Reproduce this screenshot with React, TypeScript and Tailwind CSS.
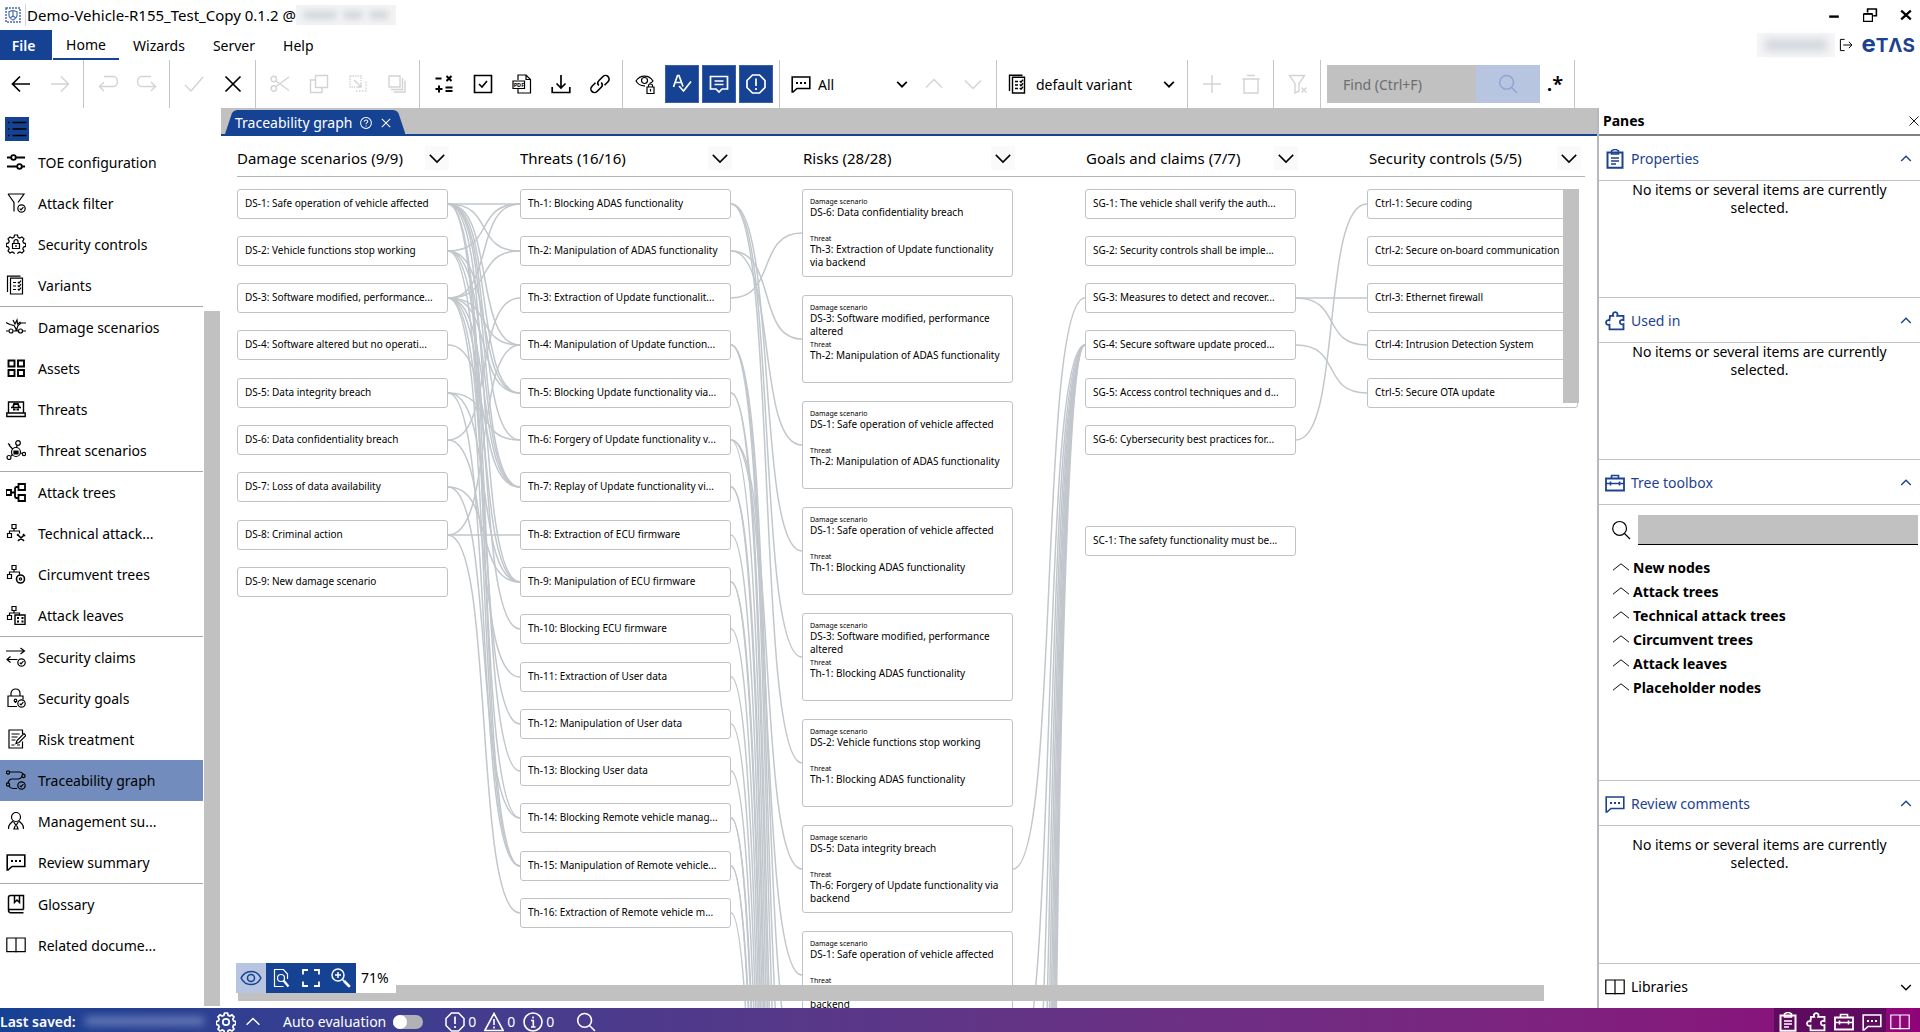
import type { ReactNode } from "react";

type IconProps = { children: ReactNode; className?: string; sw?: number; size?: string };

function Icon({ children, className = "", sw = 1.2, size = "size-5" }: IconProps) {
  return (
    <svg viewBox="0 0 20 20" fill="none" stroke="currentColor" strokeWidth={sw} className={`${size} shrink-0 ${className}`} aria-hidden="true">
      {children}
    </svg>
  );
}

/* ---------- shared glyphs ---------- */
const gComment = (
  <>
    <path d="M1.2 3h17.6v11.5H6L2 18H1.2z" strokeWidth="1.6" />
    <path d="M5 9h2M9 9h2M13 9h2" strokeWidth="2" />
  </>
);
const gBook = <path d="M.8 3h18.4v13.6H.8zM10 3v14.4" />;
const gClipboard = (
  <>
    <path d="M2.5 3.5h15v15.3h-15z" strokeWidth="2" />
    <path d="M6.5 1.8c2-1.4 5-1.4 7 0V5h-7z" fill="none" strokeWidth="1.5" />
    <path d="M6 9h8M6 12h8M6 15h5" strokeWidth="1.4" />
  </>
);
const gPuzzle = (
  <path
    d="M5 4.8h3.2c-.8-2 0-3.600 2-3.600s2.800 1.600 2 3.600H18.500v4.400c-2.200-.8-3.700.2-3.700 1.900s1.500 2.700 3.700 1.900v5.300H4.500v-4.600c-1.800.6-3.500-.2-3.500-2.200s1.700-2.800 3.500-2.200z"
    strokeWidth="1.8"
  />
);
const gToolbox = (
  <>
    <path d="M1 5.500h18v12H1z" strokeWidth="1.800" />
    <path d="M6.500 5V2.500h7V5M1 10.500h18M5.500 8.500v4M14.500 8.500v4" strokeWidth="1.600" />
  </>
);
const gSearch = <path d="M8.600 1.500a6.900 6.900 0 1 1 0 13.800 6.900 6.900 0 0 1 0-13.800zM13.500 13.500l5.500 5.500" />;
const gBadge = (
  <>
    <circle cx="15.500" cy="15.500" r="3.700" />
    <path d="M13.700 15.600l1.300 1.300 2.400-2.700" />
  </>
);
const gChecklist = (
  <>
    <path d="M1.500 17V1.200h13" />
    <path d="M4.500 3.200h12v15.800h-12z" />
    <path d="M7 7.500h3M7 11h3M7 14.500h3M11.800 7l1.200 1.200 2-2.500M11.800 10.500l1.200 1.200 2-2.500M11.800 14l1.200 1.200 2-2.500" />
  </>
);
const gTree = (
  <>
    <path d="M6 1.500h4v4H6zM1.500 10.500h4v4h-4z" />
    <path d="M8 5.500V8M3.500 10.500V8h10v2.500" />
  </>
);
const gChevDown = <path d="M2 6.500l8 8 8-8" />;
const gChevUp = <path d="M2 13.500l8-8 8 8" />;
const gGear = (
  <path d="M8.500 1h3l.6 2.300 1.700.8 2.200-1.200 2 2-1.200 2.200.7 1.800 2.200.7v2.800l-2.200.7-.7 1.800 1.200 2.100-2 2-2.200-1.100-1.700.8-.6 2.300h-3l-.6-2.300-1.700-.8-2.200 1.100-2-2 1.200-2.100-.7-1.800-2.200-.7V9.600l2.200-.7.700-1.800L2 4.900l2-2 2.200 1.200 1.700-.8z" />
);
const gOctagon = (
  <>
    <path d="M6.500 1h7L19 6.500v7L13.500 19h-7L1 13.500v-7z" />
    <path d="M10 4.500v7.500M10 14v2" strokeWidth="1.700" />
  </>
);

/* ---------- title and menu bar ---------- */
function TitleBar() {
  return (
    <header className="flex h-[30px] shrink-0 items-center pl-[5px]">
      <svg viewBox="0 0 16 16" className="size-4 text-[#4a6cb0]" fill="none" stroke="currentColor" aria-hidden="true">
        <rect x="1" y="1" width="14" height="14" strokeDasharray="2 1" strokeWidth="1.500" />
        <path d="M8 3.500l4 1.300v3.500c0 2.500-2 3.700-4 4.700-2-1-4-2.200-4-4.700V4.800zM8 3.500V9M8 9l-3 2M8 9l3 2" strokeWidth="1.200" />
      </svg>
      <div className="ml-1 mr-px h-[22px] w-px bg-gray-300" />
      <h1 className="whitespace-nowrap text-[15px] leading-5">Demo-Vehicle-R155_Test_Copy 0.1.2 @</h1>
      <div className="flex h-5 w-[100px] items-center gap-2 overflow-hidden bg-[#f3f3f3] px-2" aria-hidden="true">
        <div className="h-2 w-9 bg-gray-300 blur-[3px]" />
        <div className="h-2 w-5 bg-gray-300 blur-[3px]" />
        <div className="h-2 w-5 bg-gray-300 blur-[3px]" />
      </div>
      <div className="-mr-1 ml-auto flex">
        <button aria-label="Minimize" className="flex w-9 justify-center"><Icon size="size-4"><path d="M4 12h12" strokeWidth="3" /></Icon></button>
        <button aria-label="Restore" className="flex w-9 justify-center">
          <Icon size="size-4"><path d="M2 9h11v9H2z" strokeWidth="1.500" /><path d="M2 8.500h11M7 2.500h11.500M7 1.500V7M18 2v9h-4" strokeWidth="2" /></Icon>
        </button>
        <button aria-label="Close" className="flex w-9 justify-center"><Icon size="size-4"><path d="M4 4.500l12 11M16 4.500l-12 11" strokeWidth="2.800" /></Icon></button>
      </div>
    </header>
  );
}

const menus = ["Wizards", "Server", "Help"];

function MenuBar() {
  return (
    <nav className="flex h-[30px] shrink-0 items-stretch text-[14px]">
      <button className="w-[52px] bg-[#164293] pr-[5px] font-semibold text-white">File</button>
      <button className="ml-px w-[66px] border-b-2 border-[#164293]">Home</button>
      {menus.map((m) => (
        <button key={m} className="px-[14px]">{m}</button>
      ))}
      <div className="ml-auto flex items-center pr-[5px]">
        <div className="flex h-6 w-[78px] items-center bg-[#f6f6f6] px-2" aria-hidden="true"><div className="h-3 w-full bg-gray-300 blur-[4px]" /></div>
        <button aria-label="Log out" className="ml-1 mr-2">
          <Icon size="size-[14px]" sw={1.400}><path d="M8 2H2v16h6M6 10h12M14 5.500l4.500 4.500-4.500 4.500" /></Icon>
        </button>
        <span className="flex items-baseline font-['Inter',sans-serif] font-bold leading-6 text-[#1d428f]">
          <span className="text-[24px]">e</span><span className="text-[19px]">TΛS</span>
        </span>
      </div>
    </nav>
  );
}

/* ---------- toolbar ---------- */
function Tool({ label, children, off, sw }: { label: string; children: ReactNode; off?: boolean; sw?: number }) {
  return (
    <button aria-label={label} disabled={off} className={`flex h-full w-[39px] items-center justify-center ${off ? "text-[#d3d3d3]" : "text-black"}`}>
      <Icon sw={sw ?? 1.400}>{children}</Icon>
    </button>
  );
}

function Group({ children, className = "pl-1 pr-[3px]" }: { children: ReactNode; className?: string }) {
  return <div className={`flex shrink-0 items-center border-r border-[#c1c7cc] ${className}`}>{children}</div>;
}

function Toggle({ label, children }: { label: string; children: ReactNode }) {
  return (
    <button aria-label={label} aria-pressed="true" className="flex h-[38px] w-[34px] items-center justify-center border border-[#3a5fa5] bg-[#164293] text-white">
      <Icon sw={1.700}>{children}</Icon>
    </button>
  );
}

function Toolbar() {
  return (
    <div className="flex h-12 shrink-0">
      <Group className="pl-px pr-1">
        <Tool label="Back" sw={1.700}><path d="M19 10H1.500M9 2.500L1.500 10 9 17.500" /></Tool>
        <Tool label="Forward" off><path d="M1 10h17.500M11 2.500l7.500 7.500-7.500 7.500" /></Tool>
      </Group>
      <Group>
        <Tool label="Undo" off><path d="M6 2.500h9.500a3.500 4.500 0 0 1 0 10H1.500M6 8l-4.500 4.500L6 17" /></Tool>
        <Tool label="Redo" off><path d="M14 2.500H4.500a3.500 4.500 0 0 0 0 10h14M14 8l4.500 4.500L14 17" /></Tool>
      </Group>
      <Group>
        <Tool label="Apply" off><path d="M1 11l6 6L19 3" /></Tool>
        <Tool label="Cancel" sw={1.700}><path d="M2.500 2.500l15 15M17.500 2.500l-15 15" /></Tool>
      </Group>
      <Group>
        <Tool label="Cut" off><path d="M19 3L6 12.500M19 16.500L6 7" /><circle cx="3.800" cy="5" r="2.700" /><circle cx="3.800" cy="14.500" r="2.700" /></Tool>
        <Tool label="Copy" off><path d="M6.500 1.500h12v12h-12zM6.500 6H1.500v12.500H13V13.500" /></Tool>
        <Tool label="Paste" off><path d="M2 2h11v5M2 2v11h5" strokeDasharray="1.500 1" /><path d="M6 6l7 7M13 8.500V13H8.500" /><path d="M8 17h10V7" strokeDasharray="1.500 1.500" /></Tool>
        <Tool label="Duplicate" off><path d="M2 2h11v11H2zM15.500 4v11.500H4M18 6.500V18H6.500" /></Tool>
      </Group>
      <Group>
        <Tool label="Calculate" sw={2}><path d="M1.500 4.500h6M12.500 2l5 5M17.500 2l-5 5M1.500 15h7M5 11.500v7M11.500 13.500h7M11.500 17h7" /></Tool>
        <Tool label="Check" sw={1.600}><path d="M1.500 1.500h17v17h-17z" /><path d="M6 10l3 3 5-6" /></Tool>
        <Tool label="Export PDF" sw={1.200}>
          <path d="M6 6V1h8l4.500 4.500V19H6v-4M14 1v4.500h4.500" />
          <path d="M1 7h11.500v7.500H1z" fill="white" />
          <text x="1.700" y="12.900" fontSize="5.500" fontWeight="bold" fill="currentColor" stroke="none">PDF</text>
        </Tool>
        <Tool label="Download" sw={1.700}><path d="M1.200 13v5.500h17.600V13M10 1v12.500M5.500 9.500L10 14l4.500-4.500" /></Tool>
        <Tool label="Link" sw={1.600}>
          <path d="M8.800 11.500a3.600 3.600 0 0 1 .2-5l4-4a3.600 3.600 0 0 1 5 5.200l-3.500 3.600M11.200 8.500a3.600 3.600 0 0 1-.2 5l-4 4a3.600 3.600 0 0 1-5-5.200l3.500-3.600" />
        </Tool>
      </Group>
      <Group className="gap-[3px] pr-[6px]">
        <button aria-label="Restrict view" className="flex w-[39px] items-center justify-center pl-1">
          <Icon><path d="M14.500 9.500C17 8.500 18 7 18 7c-4-6.500-13-6.500-17 0 2 3.500 5.500 5 9 4.800" /><circle cx="9.500" cy="6.500" r="3" /><path d="M12 13h7v6.500h-7zM13.500 13v-1.500c0-2 4-2 4 0V13M15.500 15v2.500" /></Icon>
        </button>
        <Toggle label="Validation"><path d="M1.500 13L5.500 1.500h1.500l4 11M3 8.500h6.500M7 12l4.500 5L19 7.500" /></Toggle>
        <Toggle label="Comments"><path d="M1.500 2.500h17V15H13l-3 3-3-3H1.500zM5.500 7h9M5.500 10.500h9" /></Toggle>
        <Toggle label="Issues">{gOctagon}</Toggle>
      </Group>
      <Group className="pl-[11px] pr-1">
        <Icon>{gComment}</Icon>
        <label className="relative ml-[7px] flex h-full items-center">
          <span className="sr-only">Comment filter</span>
          <select className="h-7 w-[96px] appearance-none bg-transparent text-[14px]"><option>All</option></select>
          <Icon className="pointer-events-none absolute right-[6px]" size="size-3" sw={2.800}>{gChevDown}</Icon>
        </label>
        <Tool label="Previous" off>{gChevUp}</Tool>
        <Tool label="Next" off>{gChevDown}</Tool>
      </Group>
      <Group className="pl-[11px] pr-[5px]">
        <Icon sw={1.400}>{gChecklist}</Icon>
        <label className="relative ml-2 flex h-full items-center">
          <span className="sr-only">Variant</span>
          <select className="h-7 w-[146px] appearance-none bg-transparent text-[14px]"><option>default variant</option></select>
          <Icon className="pointer-events-none absolute right-[7px]" size="size-3" sw={2.800}>{gChevDown}</Icon>
        </label>
      </Group>
      <Group>
        <Tool label="Add" off><path d="M10 1v18M1 10h18" /></Tool>
        <Tool label="Delete" off><path d="M3 5h14v14H3zM6 1.500h8M1.500 5h17" /></Tool>
      </Group>
      <Group>
        <Tool label="Clear filter" off><path d="M1.500 1.500h15l-5.500 8v7.500l-4 2V9.500zM13.500 13.500l5 5M18.500 13.500l-5 5" /></Tool>
      </Group>
      <Group className="pl-[6px] pr-1">
        <input aria-label="Find" placeholder="Find (Ctrl+F)" className="h-[38px] w-[149px] bg-[#c1c1c1] px-4 text-[14px] placeholder:text-[#6b6d70]" />
        <button aria-label="Search" className="flex h-[38px] w-16 items-center justify-center bg-[#b8c5e0] text-[#8fa5d3]"><Icon sw={1.600}>{gSearch}</Icon></button>
        <button aria-label="Regular expression" className="w-[30px] text-[20px] font-semibold leading-6">.*</button>
      </Group>
    </div>
  );
}

/* ---------- sidebar ---------- */
const navGroups: { label: string; icon: ReactNode; active?: boolean }[][] = [
  [
    { label: "TOE configuration", icon: <g strokeWidth="1.800"><path d="M1 5.500h4M10 5.500h9M1 14.500h10M16 14.500h3" /><circle cx="7.500" cy="5.500" r="2.300" /><circle cx="13.500" cy="14.500" r="2.300" /></g> },
    { label: "Attack filter", icon: <><path d="M2 1h16l-6 8.500M8 18.500V9.500L2 1" />{gBadge}</> },
    { label: "Security controls", icon: <>{gGear}<path d="M6.500 9.500h7v5h-7zM8 9.500V7.500c0-2.500 4-2.500 4 0v2M10 11v2" /></> },
    { label: "Variants", icon: gChecklist },
  ],
  [
    { label: "Damage scenarios", icon: <><path d="M0 5.500l4 2 4 1 2 3.500v2H7.500M2.500 14H0M20 6h-5l-3 2.500-1 3v2.500h1M17 14h3M7 3l2 4 2-4 .5 4 3-2" /><circle cx="5" cy="14" r="2" /><circle cx="14.500" cy="14" r="2" /></> },
    { label: "Assets", icon: <g strokeWidth="1.900"><path d="M2.500 2.500h6v6h-6zM12 2.500h6v6h-6zM2.500 12h6v6h-6zM12 12h6v6h-6z" /></g> },
    { label: "Threats", icon: <><path d="M2.500 14V3h15v11M.8 14h18.400v3.500H.8zM5 8.500h10" strokeWidth="1.400" /><path d="M7 8l1-3h4l1 3M7 10.500h2.500M10.500 10.500H13" strokeWidth="1.800" /></> },
    { label: "Threat scenarios", icon: <><circle cx="10" cy="12" r="4.500" /><circle cx="12" cy="3" r="2.300" /><circle cx="3" cy="17.500" r="2" /><circle cx="18" cy="14" r="1.700" /><path d="M11 5.500l-.5 2M3 5l4 4.500M5 16l1.500-1.500M14.500 13l2 .5M2 3.500l2 1.500M8 12.500h4M9 11.500h2" /><path d="M8 11h4v3H8z" fill="currentColor" /></> },
  ],
  [
    { label: "Attack trees", icon: <g strokeWidth="1.800"><path d="M0 8h5v5H0zM12.500 2H19v6h-6.500zM12.500 13H19v6h-6.500zM5 10.500h3.500M12.500 5h-2c-1 0-1.500 1-1.500 2v7c0 1 .5 2 1.500 2h2" /></g> },
    { label: "Technical attack...", icon: <>{gTree}<path d="M12 12l6 6M18 12l-6 6M11 12.500l1.500-1.500M17 11l2 2" strokeWidth="1.600" /></> },
    { label: "Circumvent trees", icon: <>{gTree}<circle cx="14.500" cy="15" r="4" strokeWidth="1.600" /><circle cx="14.500" cy="15" r="1.200" /></> },
    { label: "Attack leaves", icon: <>{gTree}<path d="M9 10h10v9.500H9z" strokeWidth="1.400" /><path d="M11 13h2M15.500 13h2M11 16.500h2M15.500 16.500h2" strokeWidth="1.800" /></> },
  ],
  [
    { label: "Security claims", icon: <><path d="M0 4h18M14.500 1l4 3-4 3M11.500 12.500H1M4.500 9.500l-3.500 3 3.500 3" />{gBadge}</> },
    { label: "Security goals", icon: <><path d="M11 18.500H2V8h15v3.500M5 8V5.500c0-6 9-6 9 0V8M9.500 15v-2" /><circle cx="9.500" cy="12.500" r="1.300" />{gBadge}</> },
    { label: "Risk treatment", icon: <><path d="M16.500 12.500v6.500H3V1h13.500v4M5.500 5h8M5.500 8h6M5.500 11h4M5.500 16h3M11 16h3" /><path d="M10 14.500l1-3 7-7 2 2-7 7z" /></> },
    { label: "Traceability graph", active: true, icon: <><circle cx="2" cy="2.500" r="1.600" /><circle cx="17.500" cy="6" r="1.600" /><circle cx="2" cy="14.500" r="1.600" /><path d="M3.500 2h10c2.500 0 3.500 1.500 4 2.500M16 6.500c-1 2-2 2.500-4 2.500H6c-2 0-3.500 2-4 4M3 16c1 1.500 2 2.500 4 2.500h4" />{gBadge}</> },
    { label: "Management su...", icon: <><circle cx="10" cy="6" r="4.500" /><path d="M7 10L4 13c-1 1-1.500 3-1.500 5M13 10l3 3c1 1 1.500 3 1.500 5M7.500 10.500l2.500 4 2.500-4M9 15l-1 3h4l-1-3" /></> },
    { label: "Review summary", icon: gComment },
  ],
  [
    { label: "Glossary", icon: <g strokeWidth="1.500"><path d="M17.500 15.500V1.500H4.500c-1.500 0-2 1-2 2v12.500c0 1.500.5 2.700 2 2.700h13M2.500 15.500h15" /><path d="M8.500 1.500v7l2.500-2.500 2.500 2.500v-7" /></g> },
    { label: "Related docume...", icon: gBook },
  ],
];

function Sidebar() {
  return (
    <div className="flex w-[221px] shrink-0 flex-col">
      <div className="h-[34px] pl-[5px] pt-[9px]">
        <button aria-label="Toggle navigation" className="flex size-6 items-center justify-center bg-[#164293] text-black">
          <Icon sw={1.300}><path d="M1 3.500h1.500M5.500 3.500h14M1 10h1.500M5.500 10h14M1 16.500h1.500M5.500 16.500h14" /></Icon>
        </button>
      </div>
      <div className="flex min-h-0 flex-1">
        <nav className="w-[203px] overflow-hidden">
          {navGroups.map((group, i) => (
            <ul key={i} className="border-[#a8a8a8] [&:not(:last-child)]:border-b">
              {group.map((item) => (
                <li key={item.label}>
                  <a href="#" className={`flex h-[41px] items-center gap-[12px] pb-px pl-[6px] text-[14px] ${item.active ? "bg-[#728cbd]" : ""}`}>
                    <Icon>{item.icon}</Icon>
                    <span className="whitespace-nowrap">{item.label}</span>
                  </a>
                </li>
              ))}
            </ul>
          ))}
        </nav>
        <div className="mb-[2px] ml-px mt-[169px] w-4 bg-[#c1c1c1]" />
      </div>
    </div>
  );
}

/* ---------- traceability canvas ---------- */
const NODE_W = 211;
const NODE_H = 30;
const columnX = [16, 299, 581, 864, 1146];
const rowTop = (i: number) => Math.floor(12 + i * 47.3);
const rowMid = (i: number) => rowTop(i) + NODE_H / 2;
const riskTop = (i: number) => 12 + i * 106;
const riskMid = (i: number) => riskTop(i) + 44;

const damage = [
  "DS-1: Safe operation of vehicle affected",
  "DS-2: Vehicle functions stop working",
  "DS-3: Software modified, performance...",
  "DS-4: Software altered but no operati...",
  "DS-5: Data integrity breach",
  "DS-6: Data confidentiality breach",
  "DS-7: Loss of data availability",
  "DS-8: Criminal action",
  "DS-9: New damage scenario",
];
const threats = [
  "Th-1: Blocking ADAS functionality",
  "Th-2: Manipulation of ADAS functionality",
  "Th-3: Extraction of Update functionalit...",
  "Th-4: Manipulation of Update function...",
  "Th-5: Blocking Update functionality via...",
  "Th-6: Forgery of Update functionality v...",
  "Th-7: Replay of Update functionality vi...",
  "Th-8: Extraction of ECU firmware",
  "Th-9: Manipulation of ECU firmware",
  "Th-10: Blocking ECU firmware",
  "Th-11: Extraction of User data",
  "Th-12: Manipulation of User data",
  "Th-13: Blocking User data",
  "Th-14: Blocking Remote vehicle manag...",
  "Th-15: Manipulation of Remote vehicle...",
  "Th-16: Extraction of Remote vehicle m...",
];
const risks: [string, string][] = [
  ["DS-6: Data confidentiality breach", "Th-3: Extraction of Update functionality via backend"],
  ["DS-3: Software modified, performance altered", "Th-2: Manipulation of ADAS functionality"],
  ["DS-1: Safe operation of vehicle affected", "Th-2: Manipulation of ADAS functionality"],
  ["DS-1: Safe operation of vehicle affected", "Th-1: Blocking ADAS functionality"],
  ["DS-3: Software modified, performance altered", "Th-1: Blocking ADAS functionality"],
  ["DS-2: Vehicle functions stop working", "Th-1: Blocking ADAS functionality"],
  ["DS-5: Data integrity breach", "Th-6: Forgery of Update functionality via backend"],
  ["DS-1: Safe operation of vehicle affected", "Th-6: Forgery of Update functionality via backend"],
];
const goals = [
  "SG-1: The vehicle shall verify the auth...",
  "SG-2: Security controls shall be imple...",
  "SG-3: Measures to detect and recover...",
  "SG-4: Secure software update proced...",
  "SG-5: Access control techniques and d...",
  "SG-6: Cybersecurity best practices for...",
];
const controls = [
  "Ctrl-1: Secure coding",
  "Ctrl-2: Secure on-board communication",
  "Ctrl-3: Ethernet firewall",
  "Ctrl-4: Intrusion Detection System",
  "Ctrl-5: Secure OTA update",
];

// threat numbers reached from each damage scenario
const damageToThreat: number[][] = [
  [1, 2, 4, 5, 6, 7, 9, 13, 15],
  [1, 5, 7, 10, 14],
  [1, 2, 4, 5, 7, 9, 12, 15],
  [7],
  [6, 9, 15],
  [3, 11],
  [9, 14],
  [4, 8, 16],
];
// risk rows reached from each threat
const threatToRisk: number[][] = [
  [3, 4, 5], [1, 2], [0], [8, 9, 10], [11, 12], [6, 7, 13], [14, 15], [16], [17, 18], [19], [20], [21], [22], [23, 24], [25, 26], [27],
];

function curve(x0: number, y0: number, x1: number, y1: number) {
  const d = (x1 - x0) * 0.65;
  return `M${x0} ${y0}C${x0 + d} ${y0} ${x1 - d} ${y1} ${x1} ${y1}`;
}

function Edges() {
  const right = (c: number) => columnX[c] + NODE_W;
  const paths: string[] = [];
  damageToThreat.forEach((list, d) => list.forEach((t) => paths.push(curve(right(0), rowMid(d), columnX[1], rowMid(t - 1)))));
  threatToRisk.forEach((list, t) => list.forEach((r) => paths.push(curve(right(1), rowMid(t), columnX[2], riskMid(r)))));
  paths.push(curve(right(2), riskMid(6), columnX[3], rowMid(2)));
  for (let r = 8; r < 28; r += 2) paths.push(curve(right(2), riskMid(r), columnX[3], rowMid(3)));
  paths.push(curve(right(3), rowMid(2), columnX[4], rowMid(2)));
  paths.push(curve(right(3), rowMid(2), columnX[4], rowMid(3)));
  paths.push(curve(right(3), rowMid(3), columnX[4], rowMid(4)));
  paths.push(curve(right(3), rowMid(5), columnX[4], rowMid(0)));
  return (
    <svg className="absolute inset-0 size-full" fill="none" stroke="#c1c7cc" strokeWidth="1.500" aria-hidden="true">
      {paths.map((p, i) => <path key={i} d={p} />)}
    </svg>
  );
}

function Node({ x, y, text }: { x: number; y: number; text: string }) {
  return (
    <div className="absolute flex h-[30px] w-[211px] items-center overflow-hidden rounded-[3px] border border-[#bfc3c7] bg-white pb-[2px] pl-[7px]" style={{ left: x, top: y }}>
      <span className="whitespace-nowrap text-[10px] leading-3">{text}</span>
    </div>
  );
}

function RiskNode({ y, risk }: { y: number; risk: [string, string] }) {
  return (
    <div className="absolute h-[88px] w-[211px] rounded-[3px] border border-[#bfc3c7] bg-white pl-[7px] pr-[6px] pt-2 text-[10px]" style={{ left: columnX[2], top: y }}>
      <p className="text-[7px] leading-[8px]">Damage scenario</p>
      <p className="h-[29px] leading-[13px]">{risk[0]}</p>
      <p className="text-[7px] leading-[8px]">Threat</p>
      <p className="leading-[13px]">{risk[1]}</p>
    </div>
  );
}

const headers = ["Damage scenarios (9/9)", "Threats (16/16)", "Risks (28/28)", "Goals and claims (7/7)", "Security controls (5/5)"];

function Graph() {
  return (
    <main className="flex min-w-0 flex-1 flex-col">
      <div className="flex h-7 shrink-0 items-end border-b-2 border-[#164293] bg-[#c1c1c1] pl-1">
        <div className="flex h-6 items-center bg-[#164293] pl-[10px] pr-[13px] pt-px text-[14px] text-white [clip-path:polygon(0_100%,7px_3px,9px_1px,12px_0,calc(100%-12px)_0,calc(100%-9px)_1px,calc(100%-7px)_3px,100%_100%)]">
          <span className="whitespace-nowrap">Traceability graph</span>
          <Icon className="ml-2" size="size-3" sw={1.700}><circle cx="10" cy="10" r="9" /><path d="M7 8c0-4 6-4 6-.5 0 2-3 2-3 4.500M10 14v2" /></Icon>
          <button aria-label="Close tab" className="ml-2"><Icon size="size-3" sw={1.700}><path d="M3 3l14 14M17 3L3 17" /></Icon></button>
        </div>
      </div>
      <div className="ml-4 mr-3 flex h-[41px] shrink-0 gap-[71px] border-b border-[#b5b5b5]">
        {headers.map((h) => (
          <div key={h} className="flex w-[212px] shrink-0 items-center justify-between pt-1">
            <h2 className="whitespace-nowrap text-[15px]">{h}</h2>
            <button aria-label={`Collapse ${h}`} className="flex h-6 w-6 items-center justify-center bg-[#fafafa]"><Icon size="size-[18px]" sw={1.700}>{gChevDown}</Icon></button>
          </div>
        ))}
      </div>
      <div className="relative min-h-0 flex-1 overflow-hidden">
        <Edges />
        {damage.map((t, i) => <Node key={t} x={columnX[0]} y={rowTop(i)} text={t} />)}
        {threats.map((t, i) => <Node key={t} x={columnX[1]} y={rowTop(i)} text={t} />)}
        {risks.map((r, i) => <RiskNode key={i} y={riskTop(i)} risk={r} />)}
        {goals.map((t, i) => <Node key={t} x={columnX[3]} y={rowTop(i)} text={t} />)}
        <Node x={columnX[3]} y={349} text="SC-1: The safety functionality must be..." />
        {controls.map((t, i) => <Node key={t} x={columnX[4]} y={rowTop(i)} text={t} />)}
        <div className="absolute right-[18px] top-3 h-[214px] w-4 bg-[#c1c1c1]" />
        <div className="absolute bottom-[7px] left-[17px] right-[53px] h-4 bg-[#c1c1c1]" />
        <div className="absolute bottom-[15px] left-[15px] flex h-[30px] items-stretch bg-white text-white">
          <button aria-label="Show" className="flex w-[30px] items-center justify-center bg-[#b8c5e0] text-[#164293]">
            <Icon size="size-[22px]" sw={1.400}><path d="M1 10c4-8 14-8 18 0-4 8-14 8-18 0z" /><circle cx="10" cy="10" r="3.200" /></Icon>
          </button>
          <button aria-label="Find in page" className="flex w-[30px] items-center justify-center bg-[#164293]">
            <Icon><path d="M16.500 11V6l-4-4.500h-9v17h9" /><circle cx="10" cy="10" r="3.500" /><path d="M12.500 12.500l5 6" strokeWidth="2.200" /></Icon>
          </button>
          <button aria-label="Full screen" className="flex w-[30px] items-center justify-center bg-[#164293]">
            <Icon sw={1.800}><path d="M2 6.500V2h5M13 2h5v4.500M18 13.500V18h-5M7 18H2v-4.500" /></Icon>
          </button>
          <button aria-label="Zoom in" className="flex w-[30px] items-center justify-center bg-[#164293]">
            <Icon sw={1.500}><circle cx="7" cy="7" r="6" /><path d="M7 4v6M4 7h6M11.500 11.500l7.500 7.500" /><path d="M13 13l5.500 5.500" strokeWidth="2.600" /></Icon>
          </button>
          <span className="w-10 self-center pl-[5px] text-[14px] leading-5 text-black">71%</span>
        </div>
      </div>
    </main>
  );
}

/* ---------- panes ---------- */
function PaneHeader({ icon, title, closed }: { icon: ReactNode; title: string; closed?: boolean }) {
  return (
    <h3 className={closed ? "" : "border-b border-[#c1c3c7]"}>
      <button aria-expanded={!closed} className={`flex h-11 w-full items-center gap-[6px] pl-[6px] pr-2 pt-px text-[14px] ${closed ? "text-black" : "text-[#1d428f]"}`}>
        <Icon>{icon}</Icon>
        <span>{title}</span>
        <Icon className="ml-auto" size="size-3" sw={2.300}>{closed ? gChevDown : gChevUp}</Icon>
      </button>
    </h3>
  );
}

const toolboxGroups = ["New nodes", "Attack trees", "Technical attack trees", "Circumvent trees", "Attack leaves", "Placeholder nodes"];
const emptyText = "No items or several items are currently selected.";

function Panes() {
  return (
    <aside className="flex w-[323px] shrink-0 flex-col border-l-2 border-[#b5b9be]">
      <div className="flex h-7 shrink-0 items-center border-b-2 border-[#808285] pb-px pl-1">
        <h2 className="text-[14px] font-bold">Panes</h2>
        <button aria-label="Close panes" className="ml-auto pr-px"><Icon size="size-[10px]" sw={1.800}><path d="M1 1l18 18M19 1L1 19" /></Icon></button>
      </div>
      <section className="h-[162px] shrink-0 border-b border-[#c1c3c7]">
        <PaneHeader icon={gClipboard} title="Properties" />
        <p className="px-6 text-center text-[14px] leading-[18px]">{emptyText}</p>
      </section>
      <section className="h-[162px] shrink-0 border-b border-[#c1c3c7]">
        <PaneHeader icon={gPuzzle} title="Used in" />
        <p className="px-6 text-center text-[14px] leading-[18px]">{emptyText}</p>
      </section>
      <section className="h-[321px] shrink-0 border-b border-[#c1c3c7]">
        <PaneHeader icon={gToolbox} title="Tree toolbox" />
        <label className="flex items-center gap-[7px] pl-3 pr-[2px] pt-[10px]">
          <Icon>{gSearch}</Icon>
          <span className="sr-only">Search nodes</span>
          <input className="h-[30px] min-w-0 flex-1 border-b border-black bg-[#c1c1c1] px-2" />
        </label>
        <ul className="pt-[10px]">
          {toolboxGroups.map((g) => (
            <li key={g}>
              <button className="flex h-6 items-center gap-1 pl-[14px] text-[14px] font-bold">
                <Icon size="size-4" sw={1.200}><path d="M0 14l10-8 10 8" /></Icon>
                {g}
              </button>
            </li>
          ))}
        </ul>
      </section>
      <section className="min-h-0 flex-1 border-b border-[#c1c3c7]">
        <PaneHeader icon={gComment} title="Review comments" />
        <p className="px-6 pt-[10px] text-center text-[14px] leading-[18px]">{emptyText}</p>
      </section>
      <section className="shrink-0">
        <PaneHeader icon={gBook} title="Libraries" closed />
      </section>
    </aside>
  );
}

/* ---------- status bar ---------- */
function StatusBar() {
  return (
    <footer className="flex h-6 shrink-0 items-center bg-linear-to-r from-[#154194] to-[#8f0379] text-[14px] leading-5 text-white">
      <div className="flex h-full items-center pt-[3px]">
        <span className="w-[77px] whitespace-nowrap font-semibold">Last saved:</span>
        <div className="h-full w-[135px] overflow-hidden px-2 py-[6px]" aria-hidden="true"><div className="h-2 bg-[#6c80bb] blur-[4px]" /></div>
        <button aria-label="Settings" className="ml-1"><Icon sw={1.700}>{gGear}<circle cx="10" cy="10" r="3.200" /></Icon></button>
        <button aria-label="Expand" className="ml-[9px]"><Icon size="size-4" sw={1.800}>{gChevUp}</Icon></button>
        <label className="ml-[22px] flex items-center gap-[7px] whitespace-nowrap">
          Auto evaluation
          <input type="checkbox" role="switch" className="sr-only" />
          <span className="flex h-[14px] w-[30px] items-center rounded-full bg-[#b0b2b5]"><span className="size-[14px] rounded-full bg-white" /></span>
        </label>
        <div className="ml-[22px] flex items-center gap-2">
          <span className="flex items-center gap-[3px]"><Icon sw={1.500}>{gOctagon}</Icon>0</span>
          <span className="flex items-center gap-[3px]"><Icon sw={1.600}><path d="M10 1.500L19.200 18.500H.8zM10 7v6M10 14.500v2" /></Icon>0</span>
          <span className="flex items-center gap-[3px]"><Icon sw={1.600}><circle cx="10" cy="10" r="9" /><path d="M8 8.500h2.300V15M8 15h4.500M10 4.500v2" /></Icon>0</span>
        </div>
        <button aria-label="Search" className="ml-[22px]"><Icon sw={1.600}>{gSearch}</Icon></button>
      </div>
      <div className="ml-auto flex h-full items-center">
        <div className="flex h-full items-center gap-2 bg-[#5e0a5f] px-1 pt-[3px]">
          <button aria-label="Properties"><Icon>{gClipboard}</Icon></button>
          <button aria-label="Used in"><Icon>{gPuzzle}</Icon></button>
          <button aria-label="Tree toolbox"><Icon>{gToolbox}</Icon></button>
          <button aria-label="Review comments"><Icon>{gComment}</Icon></button>
        </div>
        <button aria-label="Libraries" className="ml-1 mr-[10px] pt-[3px]"><Icon>{gBook}</Icon></button>
      </div>
    </footer>
  );
}

export default function App() {
  return (
    <div className="flex h-screen flex-col overflow-hidden bg-white font-['Noto_Sans',sans-serif] text-black">
      <TitleBar />
      <MenuBar />
      <Toolbar />
      <div className="flex min-h-0 flex-1">
        <Sidebar />
        <Graph />
        <Panes />
      </div>
      <StatusBar />
    </div>
  );
}
